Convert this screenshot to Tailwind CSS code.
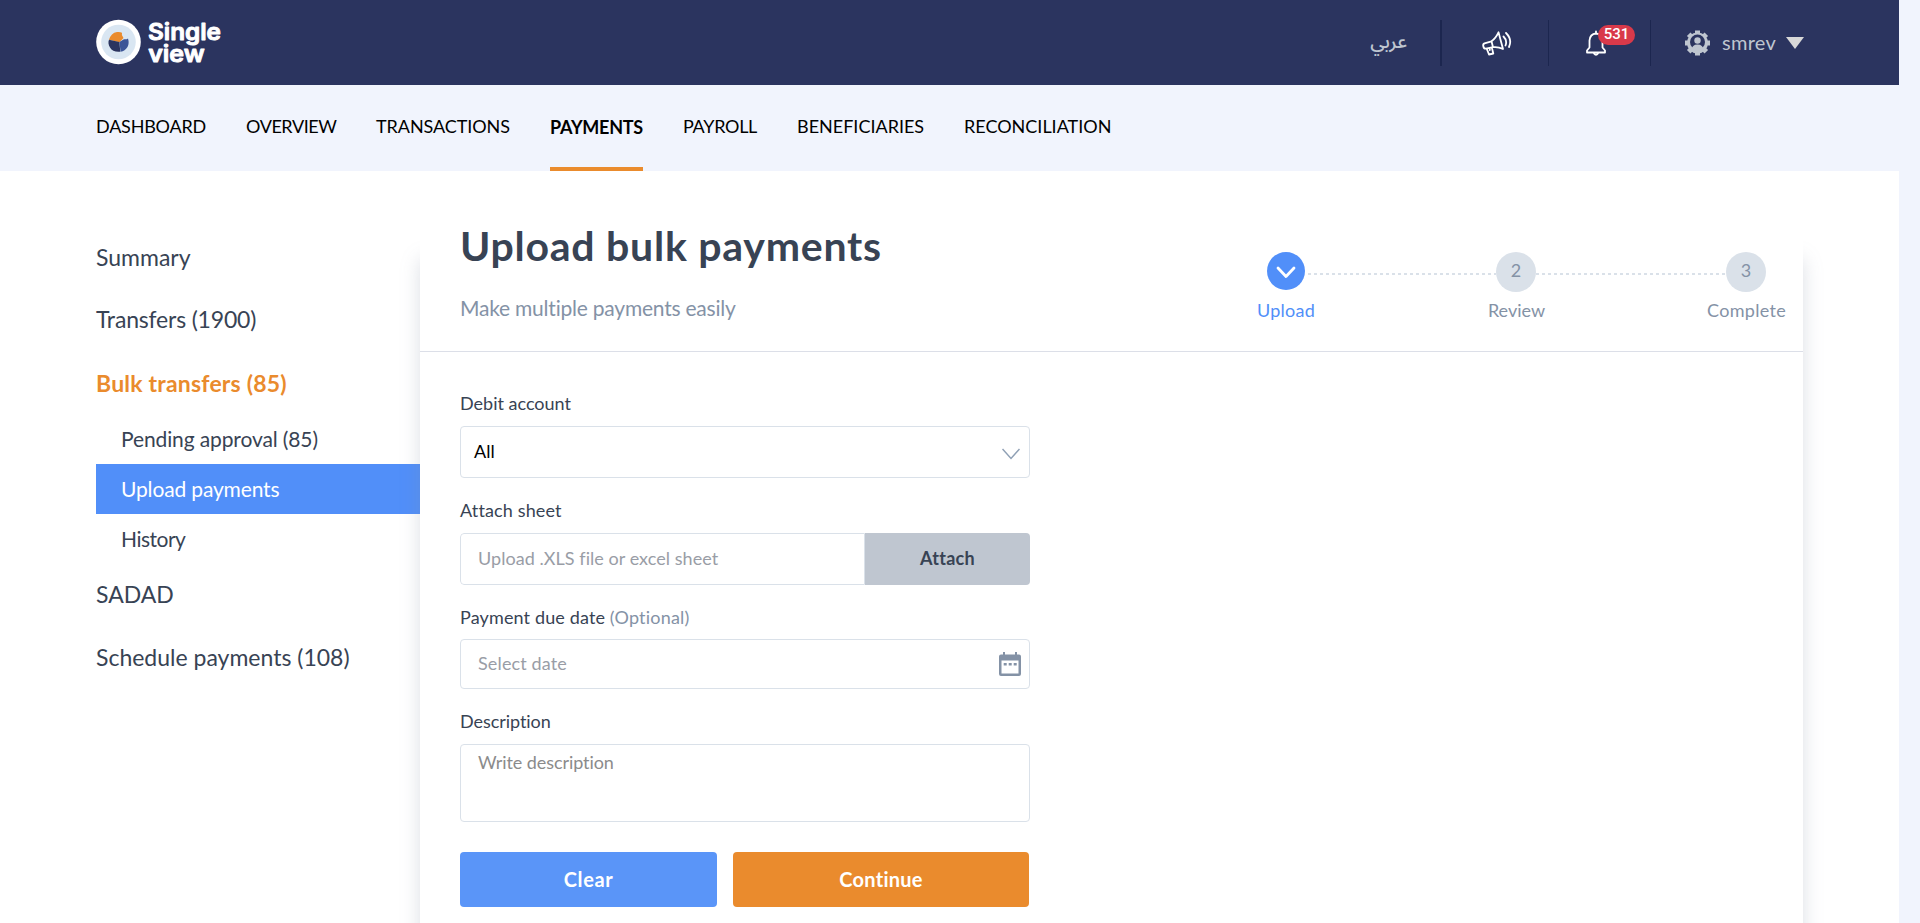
<!DOCTYPE html>
<html lang="en">
<head>
<meta charset="utf-8">
<title>Single view - Upload bulk payments</title>
<script src="https://cdn.jsdelivr.net/npm/@tailwindcss/browser@4"></script>
</head>
<body class="h-[923px] overflow-hidden bg-[#f1f4fd] font-['Lato',sans-serif] text-lg text-[#384354] [font-variant-ligatures:none]">
<div class="flex h-[923px] w-[1899px] flex-col bg-white whitespace-nowrap">
  <header class="flex h-[85px] shrink-0 items-center justify-between bg-[#2b345f] pr-[95px] pl-24 text-[#bfc6d0]">
    <svg class="h-[85px] w-[130px]" viewBox="96 0 130 85">
      <circle cx="118.5" cy="42" r="22.3" fill="#fff"/>
      <circle cx="118.5" cy="42" r="17.3" fill="#d9e6f2"/>
      <path d="M109 39.8Q111 33 117 32Q120 31.600 122 32.700Q121 35.500 123.500 38L119.500 42.200Z" fill="#ea8b2d"/>
      <path d="M109 39.800L119.400 42L120.300 51.700Q113 52.500 110 47.500Q107.500 43.500 109 39.800Z" fill="#2b345f"/>
      <path d="M119.400 42L124 39.200Q126.500 39.700 128 38.500Q129.500 43.500 127.500 47Q125 51 120.600 51.700Z" fill="#3c5597"/>
      <g fill="#fff" stroke="#fff" stroke-width=".9" stroke-linejoin="round" font-family="Inter, sans-serif" font-weight="600" font-size="23">
        <text x="148" y="40.300" textLength="73" lengthAdjust="spacingAndGlyphs">Single</text>
        <text x="148.200" y="62" textLength="56.500" lengthAdjust="spacingAndGlyphs">view</text>
      </g>
    </svg>
    <div class="flex items-center">
      <span lang="ar" dir="rtl" class="mr-[33px] w-9 text-center font-['Noto_Sans_Arabic','DejaVu_Sans',sans-serif] text-[19px] font-medium">عربي</span>
      <span class="mr-[39px] h-[46px] w-0.5 bg-[#1c264f]"></span>
      <svg class="mr-[35px] h-[26px] w-8" viewBox="0 0 32 26" fill="none" stroke="#fff" stroke-width="1.800" stroke-linejoin="round" stroke-linecap="round">
        <path d="M10.500 11.300Q14.500 8.500 17.500 2.300L22 19Q17 16.500 12 17.200M10.500 11.300L3.500 13.300Q1.700 14 2.300 16.200Q2.900 19 5 18.600L12 17.200ZM5.700 18.700L8 24.500L12.300 23.500L10.800 17.500M8.800 18V20"/>
        <path d="M22.500 6.500Q26.500 10.500 24.500 15.500M25 3Q31.500 9.500 28 17"/>
      </svg>
      <span class="mr-[37px] h-[46px] w-px bg-[#1c264f]"></span>
      <div class="relative mr-11 h-[26px] w-5">
        <svg class="h-[26px] w-5" viewBox="0 0 20 26" fill="none" stroke="#fff" stroke-width="1.800" stroke-linejoin="round" stroke-linecap="round">
          <path d="M10 1.500V3M3.500 17.500V10.500Q4 4 10 3.500Q16 4 16.500 10.500V17.500L19 20.500V22.500H1V20.500ZM8 23.500Q10 26 12 23.500"/>
        </svg>
        <span class="absolute -top-[5px] left-3 flex h-5 w-[37px] items-center justify-center rounded-full bg-[#d9394a] font-['Roboto',sans-serif] text-[15px] font-medium text-white">531</span>
      </div>
      <span class="mr-[34px] h-[46px] w-px bg-[#1c264f]"></span>
      <svg class="mr-[12px] h-[26px] w-[25px]" viewBox="0 0 25 26">
        <circle cx="12.500" cy="13" r="10.500" fill="#bfc6d0"/>
        <g stroke="#bfc6d0" stroke-width="5"><path d="M12.500.5V25.500M0 13H25M3.700 4.200L21.300 21.800M3.700 21.800L21.300 4.200"/></g>
        <circle cx="12.500" cy="12" r="7.500" fill="#2b345f"/>
        <circle cx="12.500" cy="10.500" r="3.200" fill="#bfc6d0"/>
        <path d="M6.500 20Q7 14.500 12.500 14.500Q18 14.500 18.500 20Z" fill="#bfc6d0"/>
      </svg>
      <span class="mr-[10px] w-[54px] text-[20px] tracking-[0.27px]">smrev</span>
      <svg class="h-3 w-[18px]" viewBox="0 0 18 12"><path d="M0 0H18L9 12Z" fill="#d8d8d8"/></svg>
    </div>
  </header>
  <nav class="flex h-[86px] shrink-0 gap-10 bg-[#f1f4fd] pl-24 leading-[82px] text-black">
    <a class="w-[110px] tracking-[-0.21px]">DASHBOARD</a>
    <a class="w-[90px] tracking-[-0.42px]">OVERVIEW</a>
    <a class="w-[134px] tracking-[-0.07px]">TRANSACTIONS</a>
    <a class="w-[93px] border-b-4 border-[#ea8b2d] pt-px font-bold tracking-[-0.24px]">PAYMENTS</a>
    <a class="w-[74px] tracking-[-0.3px]">PAYROLL</a>
    <a class="w-[127px]">BENEFICIARIES</a>
    <a class="w-[148px]">RECONCILIATION</a>
  </nav>
  <main class="flex min-h-0 grow pl-24">
    <aside class="w-[324px] shrink-0 pt-[54px] text-[23px]">
      <div class="h-[63px] leading-[64px]">Summary</div>
      <div class="h-[62px] leading-[63px] tracking-[-0.18px]">Transfers (1900)</div>
      <div class="h-16 leading-[66px] font-bold tracking-[0.2px] text-[#ea8b2d]">Bulk transfers (85)</div>
      <div class="text-[21px] leading-[50px]">
        <div class="pl-[25px] tracking-[-0.12px]">Pending approval (85)</div>
        <div class="bg-[#518ff9] pl-[25px] tracking-[-0.15px] text-white">Upload payments</div>
        <div class="pl-[25px] tracking-[-0.5px]">History</div>
      </div>
      <div class="leading-[60px]">SADAD</div>
      <div class="leading-[67px]">Schedule payments (108)</div>
    </aside>
    <section class="relative w-[1383px]">
      <div class="absolute inset-x-0 top-[88px] -bottom-10 shadow-[0_0_18px_rgba(130,140,160,0.28)]"></div>
      <div class="relative h-full bg-white">
        <div class="flex h-[181px] justify-between border-b border-[#dcdfe8] pt-[50px] pl-10">
          <div class="pt-px">
            <h1 class="text-[41px] leading-[48px] font-bold tracking-[0.75px]">Upload bulk payments</h1>
            <p class="mt-6 text-[21px] leading-7 tracking-[-0.22px] text-[#8492a6]">Make multiple payments easily</p>
          </div>
          <div class="flex pt-[31px] text-[#8492a6]">
            <div class="flex w-[58px] flex-col items-center text-[#518ff9]">
              <svg class="h-[38px] w-[38px]" viewBox="0 0 38 38"><circle cx="19" cy="19" r="19" fill="#518ff9"/><path d="M11 16L19 24.500L27 16" fill="none" stroke="#fff" stroke-width="2.800" stroke-linecap="round" stroke-linejoin="round"/></svg>
              <span class="mt-1.5 leading-7 tracking-[0.24px]">Upload</span>
            </div>
            <div class="-mr-2 -ml-[7px] w-[188px]"><div class="mt-[21px] h-0.5 bg-[repeating-linear-gradient(90deg,#dae1e9_0_3px,transparent_3px_6px)]"></div></div>
            <div class="flex w-[57px] flex-col items-center">
              <div class="mr-px flex size-10 items-center justify-center rounded-full bg-[#dae1e9] pb-1">2</div>
              <span class="mt-1 leading-7">Review</span>
            </div>
            <div class="-mr-[19px] -ml-[9px] w-[190px]"><div class="mt-[21px] h-0.5 bg-[repeating-linear-gradient(90deg,#dae1e9_0_3px,transparent_3px_6px)]"></div></div>
            <div class="mr-[17px] flex w-[79px] flex-col items-center">
              <div class="mr-px flex size-10 items-center justify-center rounded-full bg-[#dae1e9] pb-1">3</div>
              <span class="mt-1 leading-7 tracking-[0.31px]">Complete</span>
            </div>
          </div>
        </div>
        <div class="ml-10 w-[570px] pt-[37px] leading-7">
          <div>Debit account</div>
          <div class="mt-[9px] flex h-[52px] items-center justify-between rounded-[4px] border border-[#dae1e9] pr-[9px] pl-[13px] text-black">
            <span class="pb-0.5 tracking-[0.11px]">All</span>
            <svg class="mt-1 h-3 w-[18px]" viewBox="0 0 18 12" fill="none" stroke="#8fa0b5" stroke-width="1.500"><path d="M.5 1L9 10.500L17.500 1"/></svg>
          </div>
          <div class="mt-[18px] tracking-[0.14px]">Attach sheet</div>
          <div class="mt-[9px] flex h-[52px] overflow-hidden rounded-[4px] leading-[49px]">
            <div class="w-[405px] rounded-l-[4px] border border-[#dae1e9] pl-[17px] tracking-[0.05px] text-[#999da6]">Upload .XLS file or excel sheet</div>
            <div class="grow bg-[#bfc6d0] pt-px text-center font-bold tracking-[0.3px]">Attach</div>
          </div>
          <div class="mt-[18px] tracking-[0.14px]">Payment due date <span class="tracking-[0.2px] text-[#8492a6]">(Optional)</span></div>
          <div class="mt-2 flex h-[50px] items-center justify-between rounded-[4px] border border-[#dae1e9] pr-2 pl-[17px] text-[#999da6]">
            <span class="pb-0.5 tracking-[0.14px]">Select date</span>
            <svg class="h-6 w-[22px]" viewBox="0 0 22 24" fill="#8492a6"><path fill-rule="evenodd" d="M4 0H6V2.500H16V0H18V2.500H20Q22 2.500 22 4.500V22Q22 24 20 24H2Q0 24 0 22V4.500Q0 2.500 2 2.500H4ZM2.500 8.500V21.500H19.500V8.500Z"/><path d="M4.700 11H7.700V13.500H4.700ZM9.700 11H12.700V13.500H9.700ZM14.700 11H17.700V13.500H14.700Z"/></svg>
          </div>
          <div class="mt-[18px] tracking-[-0.06px]">Description</div>
          <div class="mt-[9px] h-[78px] rounded-[4px] border border-[#dae1e9] pt-[3px] pl-[17px] tracking-[-0.08px] text-[#8b8b8b]">Write description</div>
          <div class="mt-[30px] flex gap-4 text-center text-[20px] leading-[54px] font-bold text-white">
            <div class="h-[55px] w-[257px] rounded-[4px] bg-[#5a95f8] tracking-[0.58px]">Clear</div>
            <div class="h-[55px] w-[296px] rounded-[4px] bg-[#ea8b2d] tracking-[0.28px]">Continue</div>
          </div>
        </div>
      </div>
    </section>
  </main>
</div>
</body>
</html>
